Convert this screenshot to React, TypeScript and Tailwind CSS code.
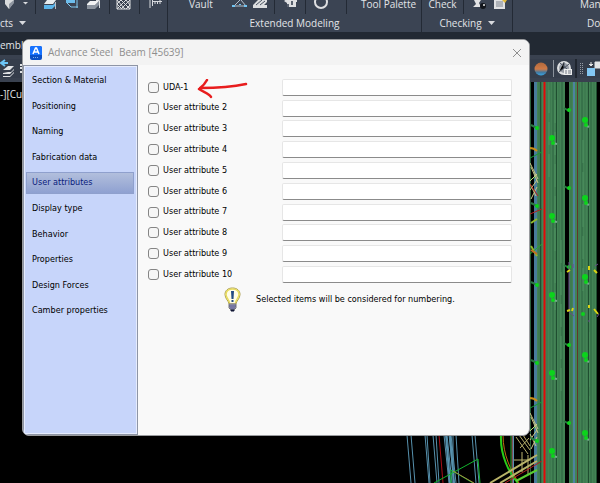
import type { ReactNode } from 'react';

const pages = [
  'Section & Material',
  'Positioning',
  'Naming',
  'Fabrication data',
  'User attributes',
  'Display type',
  'Behavior',
  'Properties',
  'Design Forces',
  'Camber properties',
];

const attributes = [
  'UDA-1',
  'User attribute 2',
  'User attribute 3',
  'User attribute 4',
  'User attribute 5',
  'User attribute 6',
  'User attribute 7',
  'User attribute 8',
  'User attribute 9',
  'User attribute 10',
];

function Panel({ className, align, label, arrow, children }: { className: string; align: string; label: string; arrow?: boolean; children: ReactNode }) {
  return (
    <section className={`flex flex-col border-r border-[#232a35] ${className}`}>
      <div className="flex h-[14px]">{children}</div>
      <button className={`flex h-[18px] items-center gap-1.5 whitespace-nowrap ${align}`}>
        {label}
        {arrow && (
          <svg className="h-[4px] w-[7px]" viewBox="0 0 7 4">
            <path d="M0 0h7L3.500 4z" fill="#d8dade" />
          </svg>
        )}
      </button>
    </section>
  );
}

function Tool({ className, label, children }: { className: string; label: string; children: ReactNode }) {
  return (
    <button aria-label={label} className={`h-[14px] shrink-0 border-r border-[#232a35] ${className}`}>
      <svg className="h-[14px] w-full">{children}</svg>
    </button>
  );
}

function TextTool({ className, label }: { className: string; label: string }) {
  return (
    <button className={`flex h-[14px] shrink-0 items-start whitespace-nowrap leading-[9px] ${className}`}>{label}</button>
  );
}

function Ribbon() {
  return (
    <header className="flex h-8 bg-[#3b4453]">
      <Panel className="w-[168px] shrink-0" align="justify-start" label="cts" arrow>
        <Tool className="w-9" label="Plate">
          <path d="M5 0h9v2l-5 7-4-5z" fill="#d9dbdd" />
          <path d="M9 4v5l5-6V0z" fill="#8e959f" />
          <path d="M23 2h5l-2.500 2.500z" fill="#d8dade" />
        </Tool>
        <Tool className="w-[74px]" label="Beams">
          <path d="M8 5h9l3-3v3l-4 4H8z" fill="#5cb5ea" />
          <path d="M8 4l3-4h9l-3 4z" fill="#e8ecee" />
          <path d="M19.500 2v7" stroke="#b8bdc4" />
          <path d="M30 0h9v3h-9z" fill="#6dbdec" />
          <path d="M31 3l4 4h7M41 0v8" stroke="#82c8ef" fill="none" />
          <path d="M51 5h8l4-4v4l-4 4h-8z" fill="#8a929d" />
          <path d="M51 4l3-3h9l-4 4h-8z" fill="#f0f1f2" />
          <path d="M60 .5h3.500V8" stroke="#e0e2e4" fill="none" />
        </Tool>
        <Tool className="w-[30px]" label="Grating">
          <path d="M7 0l8 9M11 0l9 9M16 0l4 5M7 4l5 5M20 0l-9 9M16 0L7 9M11 0L7 4M20 5l-4 4M7 0v9h13V0" stroke="#dedfe2" fill="none" />
        </Tool>
        <Tool className="w-7 border-none" label="Dimension">
          <path d="M10 0v8M12.500 0v6M12 1.500h10" stroke="#d8dade" fill="none" />
          <path d="M15 1v3M17.500 1v3M20 0v4" stroke="#d8dade" />
        </Tool>
      </Panel>
      <Panel className="w-[254px] shrink-0" align="justify-center" label="Extended Modeling">
        <TextTool className="w-16 justify-start pl-[21px]" label="Vault" />
        <Tool className="w-[43px]" label="Truss">
          <path d="M2 6l6-6M9 0l5 6M3 6h10" stroke="#b7c0ca" fill="none" />
          <path d="M0 5h3v2H0zM12 5h3v2h-3zM7 4h2v1H7z" fill="#71c4f2" />
          <path d="M21 8V5l5-5h9v2l-3 3h3v3z" fill="#dcdee0" />
          <path d="M24 5l6-5M28 5l5-4" stroke="#4a5361" />
        </Tool>
        <Tool className="w-[31px]" label="House">
          <path d="M9 1l5-4 8 3v2h-1v5h-9V3z" fill="#dedfe1" />
          <path d="M12 4h2v3h-2zM16 1h2v4h-2z" fill="#59616e" />
        </Tool>
        <Tool className="w-[41px]" label="Ring">
          <circle cx="15" cy="2" r="6" stroke="#dedfe1" strokeWidth="2" fill="none" />
        </Tool>
        <TextTool className="flex-1 justify-start pl-[14px]" label="Tool Palette" />
      </Panel>
      <Panel className="w-[91px] shrink-0" align="justify-center" label="Checking" arrow>
        <TextTool className="w-[42px] justify-center border-r border-[#232a35]" label="Check" />
        <Tool className="flex-1 border-none" label="Report">
          <path d="M10 0h7l-2 3 2 4h-8l3-3z" fill="#e2e3e5" />
          <circle cx="19" cy="6" r="3" fill="#11151b" />
          <circle cx="20" cy="5" r="1" fill="#e7e8e9" />
          <path d="M30 0h11v9H30z" fill="#e0e1e3" />
          <path d="M32 2h7M32 4h7M32 6h7" stroke="#7c838d" />
          <path d="M38 0h5l-2 3z" fill="#e0b83a" />
        </Tool>
      </Panel>
      <section className="flex flex-1 flex-col overflow-x-clip whitespace-nowrap">
        <TextTool className="justify-start pl-[67px]" label="Manager" />
        <button className="flex h-[18px] items-center pl-[74px]">Documents</button>
      </section>
    </header>
  );
}

function ToolStrip() {
  return (
    <div className="flex h-[27px] items-center justify-between border-t-4 border-b-4 border-[#39414f] bg-[#353d4b]">
      <button aria-label="Previous layer">
        <svg className="h-[19px] w-6" viewBox="0 0 24 19">
          <path d="M3 11l5-4h6l-4 4zM3 14l5-1h3l3-3v1l-4 4H3zM3 17h7l4-4v1l-4 4H3z" fill="#e1e3e5" />
          <path d="M8 4H2m3-3L1 4l4 3" stroke="#6bc4f5" strokeWidth="2" fill="none" />
          <path d="M20 6h4M20 9h4M20 13h4" stroke="#e1e3e5" strokeWidth="2" />
        </svg>
      </button>
      <div className="flex items-center">
        <button aria-label="Visual style">
          <svg className="h-[19px] w-6" viewBox="0 0 24 19">
            <defs>
              <linearGradient id="sphere" x2="0" y2="1">
                <stop offset="0" stopColor="#b0683c" />
                <stop offset=".5" stopColor="#cf7a47" />
                <stop offset=".75" stopColor="#4379a0" />
                <stop offset="1" stopColor="#38a5e4" />
              </linearGradient>
            </defs>
            <circle cx="12" cy="10" r="6.500" fill="url(#sphere)" />
          </svg>
        </button>
        <button aria-label="Render settings" className="border-l border-[#8a919b]">
          <svg className="h-[17px] w-[21px]" viewBox="0 0 21 17">
            <circle cx="10" cy="8" r="6" fill="#9a9fa8" stroke="#dddfe1" strokeWidth="2" />
            <path d="M6 3l7 6M10 2v6l-5 4M15 4l-5 4" stroke="#4b5463" />
            <path d="M10 9h8v6h-8z" fill="#eceded" />
            <path d="M11 11h2M14 11h3M11 13h2M14 13h3" stroke="#727985" />
          </svg>
        </button>
        <button aria-label="Viewports" className="border-l-2 border-[#20262f]">
          <svg className="h-[19px] w-[23px]" viewBox="0 0 23 19">
            <path d="M3.500 4v12M5.500 4v12" stroke="#959ca6" strokeDasharray="1 1" />
            <path d="M10 9h8v8h-8z" fill="#83c7f4" />
            <path d="M14 3v4m-2-2l2 2 2-2M18 3h5v6h-5z" stroke="#e2e4e6" fill="#e2e4e6" />
          </svg>
        </button>
      </div>
    </div>
  );
}

const grain = [539, 541, 547, 550, 553, 556, 559, 562, 571, 579, 582, 585, 588, 591, 594];
const boltRows = [0, 78, 157, 235, 313];

function Model() {
  return (
    <svg className="h-[401px] w-[200px] shrink-0" viewBox="400 82 200 401" fill="none">
      {/* Braces below the dialog */}
      <g stroke="#5791ad">
        <path d="M407 435l4 48M411 435l4 48M425 435l4 48M427 435l3 48M433 435l4 48M436 435l3 48M444 435l5 48M447 435l5 48M449 435l5 48M451 435l5 48M453 435v48M456 435l3 48M472 435l4 48M475 435l4 48" />
        <path d="M446 435l4 48M450 435l4 48M513 435v48" strokeWidth="2" />
      </g>
      <path d="M439 435l4 48M512 435v48" stroke="#a80f18" />
      <path d="M434 483l44-24 2 24M451 470v13M451 470l22 13" stroke="#12b52c" />
      <path d="M453 471l21 12" stroke="#a69042" />
      <path d="M501 435c-1 20 8 38 17 48" stroke="#28cb19" strokeWidth="2" />
      <path d="M503 435c0 20 8 36 16 48" stroke="#bf6b13" />
      <path d="M511 435v48" stroke="#16b032" />

      {/* Steel columns */}
      <path d="M530 82h1v401h-1z" fill="#2c5e3c" />
      <path d="M534 82h4v401h-4z" fill="#487c9b" />
      <path d="M537 82h28v401h-28zM569 82h28v401h-28z" fill="#438355" />
      <path d="M573 82h2v401h-2z" fill="#4d83a0" />
      {grain.map((x, i) => (
        <path key={x} d={`M${x} 82v401`} stroke={i % 3 === 1 ? '#2c6340' : '#3a754c'} />
      ))}
      <path d="M549 90v90M555 100v210M561 240v190M583 140v160M589 300v150" stroke="#4f9161" strokeDasharray="23 9" />
      <path d="M540.500 82v401M556.500 82v401M588.500 82v401M596.500 82v401" stroke="#1f4e30" />
      <path d="M577.500 82v401" stroke="#623828" />
      <path d="M544.500 82v401" stroke="#e30808" strokeWidth="2" />

      {/* Joints on the left flange */}
      {[0, 250].map((y) => (
        <g key={y} transform={`translate(0 ${y})`}>
          <path d="M530 148c3 0 5 1 7 3" stroke="#c88e19" strokeWidth="2" />
          <path d="M530 158l12-6M530 180l7-4" stroke="#159c32" />
          <path d="M530 163l8 16M531 167l7 16M530 181l7-7M530 190l7-10M530 184l6 12M531 199l6-12" stroke="#cbc785" />
        </g>
      ))}
      <path d="M530 184l8 12M530 214l12-5" stroke="#b31e20" />
      <path d="M531 223l6-4M531 246l6 10" stroke="#91b92a" strokeWidth="2" />
      <path d="M530 254l12-10" stroke="#25aa31" />
      <path d="M531 250l6 4" stroke="#c26e23" strokeWidth="2" />
      <path d="M516 437l12 17M519 435l11 15M523 435l7 11M520 448l9-10" stroke="#b7af6b" />
      <path d="M490 483l47-28M500 483l37-22" stroke="#b9b368" strokeWidth="2" />
      <path d="M522 452v20M514 460h16M528 455v20" stroke="#bdb671" />
      <path d="M505 483l37-22" stroke="#b31e20" />
      <path d="M516 481l21-11" stroke="#59cc31" strokeWidth="2" />

      {/* Bolts */}
      {boltRows.map((y) => (
        <g key={y} transform={`translate(0 ${y})`}>
          <path d="M531 125l6 3M564 108l5 3" stroke="#2c7943" strokeWidth="2" />
          <path d="M552 143l5 1M585 125l4 2" stroke="#76a98a" strokeWidth="2" />
          <g fill="#0cd31c">
            <circle cx="537" cy="128" r="2" />
            <circle cx="569" cy="110" r="2" />
            <circle cx="552" cy="138" r="3" />
            <circle cx="553" cy="143" r="2" />
            <circle cx="585" cy="120" r="3" />
            <circle cx="586" cy="125" r="2" />
          </g>
        </g>
      ))}
      <path d="M569 262v50M573 264v4M598 264l-3 2M597 317l2-3M569 312l5 4M589 322v-2" stroke="#6a4a8c" />
      <path d="M567 272l3-2M589 266v4M594 270l3 3M567 311l3-1M589 305v3M594 309l4 5M573 308l-1 3" stroke="#d9d414" strokeWidth="2" />
      <circle cx="583" cy="314" r="2" fill="#0cd31c" />
    </svg>
  );
}

function Bulb() {
  return (
    <svg className="h-[25px] w-[17px]" viewBox="0 0 17 25">
      <path d="M5 17c0-3-4-5-4-9.500C1 3.500 4 1 8.500 1S16 3.500 16 7.500c0 4.500-4 6.500-4 9.500z" fill="#fffde6" stroke="#a89a48" />
      <path d="M5.500 16c0-3-3.500-5-3.500-8.500C2 4 5 2 8.500 2S15 4 15 7.500c0 3.500-3.500 5.500-3.500 8.500" fill="none" stroke="#e8dc5c" strokeWidth="1.500" />
      <path d="M7 4h3l-.5 8h-2zM7.500 13h2v2h-2z" fill="#234b84" />
      <path d="M5 17h7v4l-2 2H7l-2-2z" fill="#9b9bc5" stroke="#777" />
      <path d="M5 19h7M6 21h5" stroke="#55557f" />
      <path d="M7 23h3v1H7z" fill="#101635" stroke="#101635" />
    </svg>
  );
}

function Dialog() {
  return (
    <div
      role="dialog"
      aria-label="Advance Steel Beam [45639]"
      className="absolute top-[39px] right-[70px] bottom-[47px] left-[22px] flex flex-col overflow-hidden rounded-[7px] border border-[#999b9e] bg-[#f9f9f9] font-['DejaVu_Sans_Condensed','DejaVu_Sans',sans-serif] text-[9px] text-black"
    >
      <div className="flex h-[25px] shrink-0 items-center bg-[#f3f3f3] px-[7px] font-['Open_Sans',sans-serif] text-[10px] text-[#8e8e8e]">
        <svg className="h-[14px] w-3" viewBox="0 0 12 14">
          <rect width="12" height="14" rx="2" fill="#0b4fc4" />
          <path d="M0 2q0-2 2-2h8q2 0 2 2v7H0z" fill="#1672ff" />
          <path d="M3 8l2.500-6h1L9 8M4 6h4" stroke="#fff" strokeWidth="1.500" fill="none" />
          <path d="M3 11.500h6" stroke="#7fadea" strokeDasharray="1 1" />
        </svg>
        <span className="ml-1.5">Advance Steel</span>
        <span className="ml-1.5">Beam [45639]</span>
        <button aria-label="Close" className="ml-auto">
          <svg className="h-[10px] w-[10px]" viewBox="0 0 10 10">
            <path d="M1 1l8 8M9 1L1 9" stroke="#8f8f8f" />
          </svg>
        </button>
      </div>

      <div className="flex flex-1">
        <nav className="w-[115px] shrink-0 border border-[#8e95a5] bg-[#c7d5fa] px-px pt-0.5 shadow-[inset_0_0_0_1px_#e6ecfd]">
          <div className="grid h-64 auto-rows-fr items-center">
            {pages.map((page) => (
              <button
                key={page}
                className={
                  page === 'User attributes'
                    ? 'mr-0.5 ml-px h-[22px] border border-[#8fa0cd] bg-linear-to-b from-[#b2bfdc] to-[#8fa1d1] pl-[5px] text-left text-[#0a1b7c]'
                    : 'h-[22px] pl-[7px] text-left'
                }
              >
                {page}
              </button>
            ))}
          </div>
        </nav>

        <form className="flex-1 pt-3 pr-[17px] pl-[10px]">
          <div className="grid h-52 auto-rows-fr items-center">
            {attributes.map((name, i) => (
              <div key={name} className="relative flex items-center">
                <label className="flex w-[134px] shrink-0 items-center gap-1">
                  <input type="checkbox" className="h-[11px] w-[11px] appearance-none rounded-[3px] border border-[#858585] bg-[#f6f6f6] checked:bg-[#0067c0]" />
                  {name}
                </label>
                <input
                  type="text"
                  aria-label={`${name} value`}
                  className="h-[17px] min-w-0 flex-1 rounded-[2px] border border-[#e6e6e6] border-b-[#8b8b8b] bg-white px-1 outline-none"
                />
                {i === 0 && (
                  <svg className="absolute top-0 left-[49px] h-[22px] w-[52px]" viewBox="0 0 52 22" fill="none" stroke="#e81d1e" strokeWidth="2.500" strokeLinecap="round" strokeLinejoin="round">
                    <path d="M49 5C35 8 20 9 3 9M10 1C8 5 6 7 2 10C6 13 12 14 14 18" />
                  </svg>
                )}
              </div>
            ))}
          </div>
          <p className="flex items-center gap-[15px] pt-0.5 pl-[76px]">
            <Bulb />
            Selected items will be considered for numbering.
          </p>
        </form>
      </div>
    </div>
  );
}

export default function App() {
  return (
    <div className="relative flex h-screen flex-col overflow-hidden bg-black font-['Open_Sans',sans-serif] text-[10px] text-[#e3e5e8]">
      <Ribbon />
      <div className="flex h-[23px] items-center bg-[#222933] pt-1">
        <a href="#assembly">embly</a>
      </div>
      <ToolStrip />
      <main className="flex flex-1 justify-between overflow-hidden">
        <span className="pt-[5px]">-][Custom View]</span>
        <Model />
      </main>
      <Dialog />
    </div>
  );
}
